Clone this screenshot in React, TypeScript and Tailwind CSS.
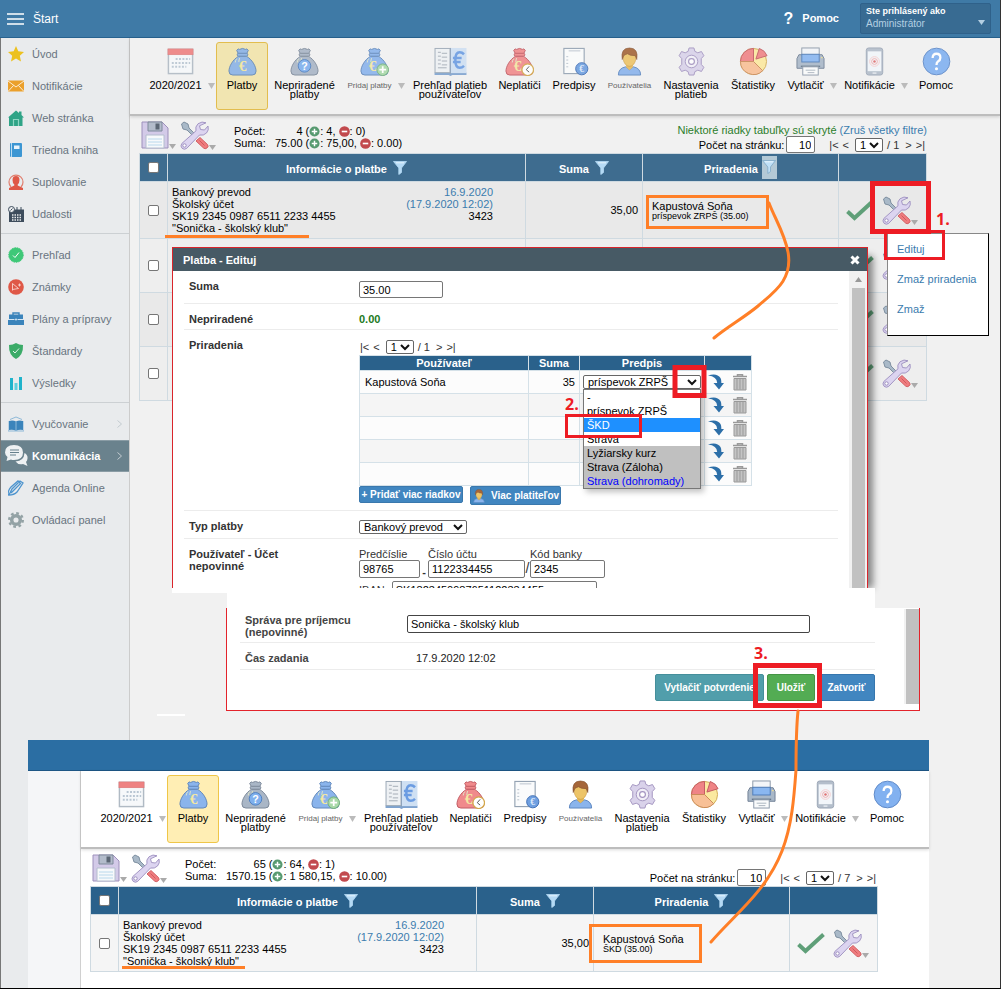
import type { ReactNode } from "react";
import clsx from "clsx";

/* ---------- icons ---------- */

type BagProps = { fill: string; stroke: string; children?: ReactNode };

function Bag({ fill, stroke, children }: BagProps) {
    return (
        <svg viewBox="0 0 30 30" className="h-[29px] w-[29px]" aria-hidden="true">
            <path d="M11 9.500C5 13 1 20 1 25q0 4 4 4h20q4 0 4-4c0-5-4-12-10-15.500z" fill={fill} stroke={stroke} />
            <path d="M9 3.500q1.500-2.500 3-1 3-2 6 0 1.500-1.500 3 1L19 7.500h-8z" fill={fill} stroke={stroke} />
            <rect x="9.500" y="6.500" width="11" height="3" rx="1.500" fill={fill} stroke={stroke} />
            <path d="M9 12q-1.500 2-1.500 4M12 11.500q-.8 2-.8 4" stroke="#dfe6c8" fill="none" />
            {children}
        </svg>
    );
}

function Euro({ x = 15, y = 25, size = 16, color = "#f3e7a2" }: { x?: number; y?: number; size?: number; color?: string }) {
    return (
        <text x={x} y={y} fontSize={size} fontWeight="bold" fill={color} textAnchor="middle" fontFamily="Liberation Serif, serif">
            €
        </text>
    );
}

const BlueBag = () => (
    <Bag fill="#8ab4ec" stroke="#5f86b8"><Euro /></Bag>
);

const GreyBag = () => (
    <Bag fill="#a9b6c6" stroke="#7b8898">
        <circle cx="15" cy="19.500" r="6.500" fill="#7fb0ee" stroke="#4f7fc0" />
        <text x="15" y="23.500" fontSize="11" fontWeight="bold" fill="#fff" textAnchor="middle">?</text>
    </Bag>
);

const AddBag = () => (
    <Bag fill="#8ab4ec" stroke="#5f86b8">
        <Euro x={13} />
        <circle cx="23.500" cy="23.500" r="6" fill="#a9d9a9" stroke="#6fae78" />
        <path d="M23.500 20v7M20 23.500h7" stroke="#fff" strokeWidth="1.800" />
    </Bag>
);

const RedBag = () => (
    <Bag fill="#f08a8c" stroke="#c05a62">
        <Euro x={13} />
        <circle cx="23.500" cy="23.500" r="6" fill="#fff" stroke="#d3a84c" strokeWidth="1.300" />
        <path d="M25 20l-3 3.500 3 2.500" stroke="#555" fill="none" />
    </Bag>
);

const Calendar = () => (
    <svg viewBox="0 0 30 30" className="h-[29px] w-[29px]" aria-hidden="true">
        <rect x="2.500" y="2.500" width="25" height="25" fill="#f6f8fa" stroke="#b0bac4" strokeWidth="1.500" />
        <rect x="2" y="2" width="26" height="6" fill="#ee8282" stroke="#d97474" strokeWidth=".6" />
        <path d="M10 12.500h15M6 16.500h19M6 20.500h15" stroke="#b9c6d3" strokeWidth="2" strokeDasharray="2 1.500" />
    </svg>
);

const Book = () => (
    <svg viewBox="0 0 34 30" className="h-[29px] w-[33px]" aria-hidden="true">
        <path d="M.5 26.500h33V29H19l-2 1-2-1H.5z" fill="#7fa3cf" />
        <rect x="1" y="1.500" width="15.500" height="25" fill="#eef1f4" stroke="#9ba8b5" />
        <rect x="17" y="1" width="16.500" height="26" fill="#cfe0f3" />
        <path d="M17 1v27" stroke="#8aa0b8" />
        <path d="M4 5.500h3M4 9.500h3M4 13.500h3M4 17.500h3M8 6.500h5.500M8 10.500h5.500M8 14.500h5.500M8 18.500h5.500M4 21.500h9" stroke="#a3abb4" />
        <path d="M31 7.500Q29 5.500 26.500 5.500q-4.500 0-4.500 8t4.500 8q2.500 0 4.500-2M19.500 11.500h9M19.500 15.500h8" fill="none" stroke="#6b9ce2" strokeWidth="2.600" />
    </svg>
);

const Document = () => (
    <svg viewBox="0 0 30 30" className="h-[29px] w-[29px]" aria-hidden="true">
        <rect x="4" y="1.500" width="21" height="26" fill="#fafbfc" stroke="#95a3b3" strokeWidth="1.200" />
        <path d="M6.500 10h2M6.500 13.500h2M6.500 17h2M6.500 20.500h2M9 4h12" stroke="#b9c2cc" />
        <circle cx="22.500" cy="22.500" r="6.300" fill="#6f9fe0" stroke="#3f6fb5" />
        <Euro x={22.5} y={26} size={10} color="#dce9fb" />
    </svg>
);

function Person({ className = "h-[29px] w-[29px]" }: { className?: string }) {
    return (
        <svg viewBox="0 0 30 30" className={className} aria-hidden="true">
            <path d="M3.500 29q0-7 7.500-8.500l4 3 4-3q7.500 1.500 7.500 8.500z" fill="#8ab4ec" stroke="#5b86c0" />
            <path d="M11.500 17h7v4l-3.500 3-3.500-3z" fill="#e5b95c" />
            <ellipse cx="15" cy="11.500" rx="6.500" ry="8.500" fill="#edc468" stroke="#c9973a" strokeWidth=".6" />
            <path d="M7.500 13Q5.500 1 15 1q9.500 0 7.500 12l-1.500-4q-6 0-8-2-3 1-4 2z" fill="#a5663a" stroke="#7f4a28" strokeWidth=".6" />
        </svg>
    );
}

const Gear = () => (
    <svg viewBox="0 0 30 30" className="h-[29px] w-[29px]" aria-hidden="true">
        <path
            d="M12.500 1h5l1 3.500 3 1.500 3.800-1.300 2.500 4.300-2.700 3v6l2.700 3-2.500 4.300-3.800-1.300-3 1.500-1 3.500h-5l-1-3.500-3-1.500-3.800 1.300L2.200 21l2.700-3v-6l-2.700-3 2.500-4.300L8.500 6l3-1.500z"
            fill="#d9d2ea" stroke="#a394c0" strokeLinejoin="round"
        />
        <circle cx="15" cy="15" r="6.500" fill="#f1eff7" stroke="#a394c0" />
        <circle cx="15" cy="15" r="3" fill="#fff" stroke="#a394c0" strokeWidth="1.200" />
    </svg>
);

const Pie = () => (
    <svg viewBox="0 0 30 30" className="h-[29px] w-[29px]" aria-hidden="true">
        <circle cx="15" cy="15" r="13.500" fill="#fbe9a0" stroke="#d0ab55" />
        <path d="M15 15V1.500A13.500 13.500 0 0 0 1.500 15z" fill="#ef8486" stroke="#c25a60" />
        <path d="M15 15H1.500A13.500 13.500 0 0 0 24.500 24.500z" fill="#f8c096" stroke="#c98a58" />
        <path d="M17.500 12.500l3.500-11q6 2 8 7.500z" fill="#ef8486" stroke="#c25a60" />
    </svg>
);

const Printer = () => (
    <svg viewBox="0 0 30 30" className="h-[29px] w-[29px]" aria-hidden="true">
        <rect x="6" y="1" width="18" height="9" fill="#f3f5f8" stroke="#8b98a8" />
        <path d="M3 8h24l2 4v10H1V12z" fill="#a9b8c8" stroke="#708094" />
        <rect x="6" y="7.500" width="18" height="8" fill="#8ab7f0" stroke="#4f7cb8" />
        <path d="M5 20h20" stroke="#66768a" strokeWidth="1.500" />
        <rect x="7" y="20.500" width="16" height="8.500" fill="#fafbfc" stroke="#8b98a8" />
        <path d="M10 24h10M12 26.500h7" stroke="#aab4bf" />
        <path d="M26 11h1.500" stroke="#f3e090" strokeWidth="1.500" />
    </svg>
);

const Phone = () => (
    <svg viewBox="0 0 30 30" className="h-[29px] w-[29px]" aria-hidden="true">
        <rect x="6.500" y="1" width="17" height="28" rx="2.500" fill="#b4becb" stroke="#9aa6b5" />
        <rect x="8" y="4.500" width="14" height="20.500" fill="#f2f6fa" />
        <circle cx="15" cy="15" r="5" fill="none" stroke="#f6cfcf" />
        <circle cx="15" cy="15" r="3" fill="none" stroke="#efaaaa" />
        <circle cx="15" cy="15" r="1.300" fill="#e07272" />
        <path d="M13 27h4" stroke="#e3e8ee" strokeWidth="1.500" />
    </svg>
);

const Help = () => (
    <svg viewBox="0 0 30 30" className="h-[29px] w-[29px]" aria-hidden="true">
        <circle cx="15" cy="15" r="13.800" fill="#82b1f0" stroke="#5d88c6" />
        <path d="M11 11.500q0-4.500 4-4.500t4 4q0 2.500-2.500 4-1.500 1-1.500 3.500" fill="none" stroke="#fff" strokeWidth="2.400" />
        <circle cx="15" cy="22.500" r="1.600" fill="#fff" />
    </svg>
);

const Floppy = () => (
    <svg viewBox="0 0 28 28" className="h-7 w-7" aria-hidden="true">
        <path d="M1 1h20l6 6v20H1z" fill="#d3cae8" stroke="#9d90bb" />
        <path d="M7 1h14v9H7z" fill="#b3bccb" stroke="#7f8a9b" />
        <rect x="14.500" y="2.500" width="4" height="6" fill="#5b6674" />
        <path d="M5 14h18v13H5z" fill="#f7f9fb" stroke="#b4bece" />
        <path d="M7 18h14M7 21h14M7 24h14" stroke="#b9d8ec" />
    </svg>
);

const Tools = () => (
    <svg viewBox="0 0 29 29" className="h-[29px] w-[29px]" aria-hidden="true">
        <path d="M1.500 3l2.500-2 4 2 1 4 7 7-2 2-7-7-4-1z" fill="#a9b9c8" stroke="#76889a" strokeWidth=".9" />
        <path d="M17 19l3-2.500 7.500 7q1.500 2-.5 3.500t-3.500 0L16 20z" fill="#ef7c7e" stroke="#cf5a60" strokeWidth=".9" />
        <path d="M19.500 19.500l5 5" stroke="#cf5a60" />
        <path
            d="M26 1.800q-4-2-8 1-3.200 3-2 7L1.800 22.500q-1.800 2.500.2 4.700 2.200 2 4.700.2L19.500 14q4 1 7-2 2.800-3 1.500-7l-3.500 4-4-.5-1-3.700z"
            fill="#dcd4f0" stroke="#9c8fbe" strokeWidth=".9"
        />
        <circle cx="4.500" cy="24.500" r="1.700" fill="#fff" stroke="#9c8fbe" />
    </svg>
);

const Check = () => (
    <svg viewBox="0 0 28 22" className="h-[22px] w-7" aria-hidden="true">
        <path d="M1.500 12.500l7 6.500L26.500 2.500" fill="none" stroke="#5f9f78" strokeWidth="4" />
    </svg>
);

function Funnel({ outlined }: { outlined?: boolean }) {
    return (
        <svg viewBox="0 0 14 14" className="h-[14px] w-[14px]" aria-hidden="true">
            <path
                d="M.5 0.500h13L8.500 7V11.500L5.800 13.500V7z"
                fill={outlined ? "#bfe0f7" : "#b5daf5"}
                stroke={outlined ? "#7fa9c6" : "#b5daf5"}
                strokeWidth=".8"
            />
            <path d="M3 1.800h8" stroke="#e6f4fd" />
        </svg>
    );
}

const Caret = ({ className }: { className?: string }) => (
    <svg viewBox="0 0 7 6" className={clsx("h-[5px] w-[7px] shrink-0", className)} preserveAspectRatio="none" aria-hidden="true">
        <path d="M0 0h7L3.500 6z" fill="currentColor" />
    </svg>
);

const Plus = () => (
    <svg viewBox="0 0 12 12" className="inline h-[11px] w-[11px] align-[-2px]" aria-hidden="true">
        <circle cx="6" cy="6" r="5.500" fill="#579a70" />
        <path d="M6 3v6M3 6h6" stroke="#fff" strokeWidth="1.600" />
    </svg>
);

const Minus = () => (
    <svg viewBox="0 0 12 12" className="inline h-[11px] w-[11px] align-[-2px]" aria-hidden="true">
        <circle cx="6" cy="6" r="5.800" fill="#c24a4e" />
        <path d="M3 6h6" stroke="#fff" strokeWidth="1.800" />
    </svg>
);

/* ---------- small controls ---------- */

function Checkbox({ label }: { label: string }) {
    return (
        <input
            type="checkbox"
            aria-label={label}
            className="block h-[11px] w-[11px] appearance-none rounded-[2px] border border-[#767676] bg-white"
        />
    );
}

function Select({ label, options, className }: { label: string; options: string[]; className?: string }) {
    return (
        <span className={clsx("relative inline-block h-[14px]", className)}>
            <select
                aria-label={label}
                className="block h-[14px] w-full appearance-none rounded-[2px] border border-[#666] bg-white pl-1 text-[11px] leading-3 text-black"
            >
                {options.map((o) => <option key={o}>{o}</option>)}
            </select>
            <svg viewBox="0 0 10 7" className="pointer-events-none absolute top-1 right-1 h-[7px] w-[10px]" aria-hidden="true">
                <path d="M1 1l4 4 4-4" fill="none" stroke="#111" strokeWidth="2" />
            </svg>
        </span>
    );
}

function Pager({ total }: { total: number }) {
    return (
        <div className="flex items-center text-[11px] leading-3 whitespace-pre text-[#333]">
            <a href="#first">|&lt;</a>
            <a href="#prev" className="ml-1">&lt;</a>
            <Select label="Strana" options={["1"]} className="ml-[6px] w-[28px]" />
            <span className="ml-1">/ {total}</span>
            <a href="#next" className="ml-[6px]">&gt;</a>
            <a href="#last" className="ml-1">&gt;|</a>
        </div>
    );
}

/* ---------- sidebar ---------- */

const navIcon = "h-4 w-4";

const navGroups: { label: string; icon: ReactNode; active?: boolean; more?: boolean }[][] = [
    [
        { label: "Úvod", icon: <svg viewBox="0 0 16 16" className={navIcon}><path d="M8 0l2.300 5.300 5.700.6-4.200 3.800 1.200 5.800L8 12.600l-5 2.900 1.200-5.800L0 5.900l5.700-.6z" fill="#ecc11f" /></svg> },
        { label: "Notifikácie", icon: <svg viewBox="0 0 16 16" className={navIcon}><path d="M0 2.500h16v11H0z" fill="#eba02c" /><path d="M0 3l8 6 8-6M0 13.500l5.500-6M16 13.500l-5.500-6" stroke="#fff" fill="none" strokeWidth=".8" /></svg> },
        { label: "Web stránka", icon: <svg viewBox="0 0 16 16" className={navIcon}><path d="M0 7.500L8 .5l3 2.500V1.500h2.500v3.500L16 7.500h-1.500V16H1V7.500z" fill="#2fa487" /><path d="M5.500 16V9.500h5V16" fill="none" stroke="#8fd6c4" strokeWidth="1.200" /></svg> },
        { label: "Triedna kniha", icon: <svg viewBox="0 0 16 16" className={navIcon}><rect x="2" y="1" width="12" height="14" rx="1" fill="#3c96d3" /><path d="M3.500 1v14" stroke="#b9dcf3" /><rect x="6" y="3.500" width="5.500" height="3.500" fill="#e8f3fb" /></svg> },
        { label: "Suplovanie", icon: <svg viewBox="0 0 16 16" className={navIcon}><path d="M3 13A7 7 0 1 1 13 13" fill="none" stroke="#e07f6f" strokeWidth="1.200" /><path d="M4.500 6Q4.500 2 8 2t3.500 4q0 3-1.800 4.500v1L15 14v2H1v-2l5.300-2.500v-1Q4.500 9 4.500 6z" fill="#df5847" /></svg> },
        { label: "Udalosti", icon: <svg viewBox="0 0 16 16" className={navIcon}><path d="M1 3.500h15V16H1z" fill="#3d4c5c" /><circle cx="3.500" cy="3.500" r="3" fill="#e9ebed" stroke="#3d4c5c" /><path d="M2.500 4.500l2-2M9 1v3M13 1v3" stroke="#3d4c5c" /><path d="M4 9h9M4 11.500h9M4 14h9" stroke="#e9ebed" strokeWidth="1.300" strokeDasharray="1.500 1" /></svg> },
    ],
    [
        { label: "Prehľad", icon: <svg viewBox="0 0 16 16" className={navIcon}><circle cx="8" cy="8" r="7.300" fill="#3fc878" stroke="#3fc878" strokeDasharray="1.500 1" /><path d="M5 8.500l2 2 4-5" stroke="#fff" fill="none" /></svg> },
        { label: "Známky", icon: <svg viewBox="0 0 16 16" className={navIcon}><circle cx="8" cy="8" r="7.800" fill="#df5847" /><path d="M4.500 11.500v-7l6 5-6 1M10 6h3M11.500 4.500v3" stroke="#f9d5cf" fill="none" strokeWidth=".9" /></svg> },
        { label: "Plány a prípravy", icon: <svg viewBox="0 0 16 16" className={navIcon}><path d="M5 4V2h6v2" fill="none" stroke="#3b84bb" strokeWidth="1.400" /><path d="M1 3.500h14V8h1v6H0V8h1z" fill="#3b84bb" /><path d="M0 8.500h6.500M9.500 8.500H16" stroke="#d5e6f3" /><circle cx="8" cy="8.500" r="1" fill="#d5e6f3" /></svg> },
        { label: "Štandardy", icon: <svg viewBox="0 0 16 16" className={navIcon}><path d="M8 0q3 2 7 2 .5 10-7 14Q.5 12 1 2q4 0 7-2z" fill="#3bab68" /><path d="M5 8l2 2 4-4.500" stroke="#e0f5e8" fill="none" /></svg> },
        { label: "Výsledky", icon: <svg viewBox="0 0 16 16" className={navIcon}><path d="M2 3h3v12H2zM11 2h3v13h-3z" fill="#20b3cb" /><path d="M6.500 8h3v7h-3z" fill="#5fd0de" /></svg> },
    ],
    [
        { label: "Vyučovanie", more: true, icon: <svg viewBox="0 0 16 16" className={navIcon}><path d="M1 5q4-1 7 .5Q11 4 15 5v9q-4-1-7 1-3-2-7-1z" fill="#3b84bb" /><path d="M2 3.500L8 1l6 2.500M8 5.500V15M0 5v10h16V5" stroke="#8fb9d8" fill="none" /></svg> },
        { label: "Komunikácia", more: true, active: true, icon: <svg viewBox="0 0 24 22" className="-ml-[3px] h-[22px] w-6 shrink-0"><path d="M9 0q9 0 9 7.500T9 15q-2 0-3-.5L1.500 16l1-4Q0 10 0 7.500 0 0 9 0z" fill="#eef1f3" /><path d="M19.500 8q3.500 2 3 5.500-.2 2-1.500 3.500l1.500 4-4.500-2q-5 1-7.500-2.500Q19 16 19.500 8z" fill="#eef1f3" /><path d="M5 5h9M5 7.500h9M5 10h6" stroke="#66808c" /></svg> },
        { label: "Agenda Online", icon: <svg viewBox="0 0 16 16" className={navIcon}><path d="M0 15q0-5 3-8l7-6 2 2M1 15q5 0 8-3l6-9-3-2-8 8zM3 13L13 3" fill="none" stroke="#4d94ce" strokeWidth="1.300" /></svg> },
        { label: "Ovládací panel", icon: <svg viewBox="0 0 16 16" className={navIcon}><circle cx="8" cy="8" r="4.300" fill="none" stroke="#93a2a5" strokeWidth="3.500" /><circle cx="8" cy="8" r="6.800" fill="none" stroke="#93a2a5" strokeWidth="2.400" strokeDasharray="2.700 2.640" /></svg> },
    ],
];

function Sidebar() {
    return (
        <nav className="w-[130px] shrink-0 border-r border-l border-r-[#ccc] border-l-[#777] bg-[#e9ebed]">
            {navGroups.map((group, i) => (
                <ul key={i} className={clsx(i > 0 && "mt-[3px] border-t border-[#ccd0d3] pt-[5px]")}>
                    {group.map((item) => (
                        <li key={item.label}>
                            <a
                                href="#menu"
                                className={clsx(
                                    "flex h-8 items-center pr-[7px] pl-[7px] text-[11px] leading-3",
                                    item.active ? "border-y border-[#8a9ca5] bg-[#6a828d] font-bold text-white" : "text-[#687480]",
                                )}
                            >
                                <span className="flex w-6 shrink-0 items-center">{item.icon}</span>
                                <span className="flex-1 whitespace-nowrap">{item.label}</span>
                                {item.more && (
                                    <svg viewBox="0 0 5 8" className="h-2 w-[5px]" aria-hidden="true">
                                        <path d="M.5 .5L4.500 4l-4 3.500" fill="none" stroke="#c3cbd0" />
                                    </svg>
                                )}
                            </a>
                        </li>
                    ))}
                </ul>
            ))}
        </nav>
    );
}

/* ---------- ribbon and payments list ---------- */

const ribbon: { label: string; icon: ReactNode; width: string; arrow?: boolean; small?: boolean; active?: boolean }[] = [
    { label: "2020/2021", icon: <Calendar />, width: "w-[68px]", arrow: true },
    { label: "Platby", icon: <BlueBag />, width: "w-[52px]", active: true },
    { label: "Nepriradené\nplatby", icon: <GreyBag />, width: "w-[73px]" },
    { label: "Pridaj platby", icon: <AddBag />, width: "w-[70px]", arrow: true, small: true },
    { label: "Prehľad platieb\npoužívateľov", icon: <Book />, width: "w-[78px]" },
    { label: "Neplatiči", icon: <RedBag />, width: "w-[61px]" },
    { label: "Predpisy", icon: <Document />, width: "w-[48px]" },
    { label: "Používatelia", icon: <Person />, width: "w-[63px]", small: true },
    { label: "Nastavenia\nplatieb", icon: <Gear />, width: "w-[60px]" },
    { label: "Štatistiky", icon: <Pie />, width: "w-[64px]" },
    { label: "Vytlačiť", icon: <Printer />, width: "w-[54px]", arrow: true },
    { label: "Notifikácie", icon: <Phone />, width: "w-[74px]", arrow: true },
    { label: "Pomoc", icon: <Help />, width: "w-[46px]" },
];

function Ribbon({ dim }: { dim?: boolean }) {
    return (
        <div className="flex h-[78px] border-b-2 border-[#bdbdbd] pt-1 pl-[18px] shadow-[0_1px_3px_rgba(0,0,0,0.15)]">
            {ribbon.map((item) => (
                <button
                    key={item.label}
                    type="button"
                    className={clsx(
                        "flex h-[68px] shrink-0 flex-col items-center gap-[5px] rounded-[3px] border pt-1",
                        item.width,
                        !item.active && "border-transparent",
                        item.active && (dim ? "border-[#e2bd4e] bg-[#f1e5b1]" : "border-[#efc648] bg-[#ffeeb4]"),
                    )}
                >
                    <span className={clsx(item.arrow && "mr-1", dim && "opacity-90")}>{item.icon}</span>
                    <span className="flex items-center gap-[6px]">
                        <span
                            className={clsx(
                                "leading-[9px] whitespace-pre",
                                item.small ? "text-[8px] text-[#666]" : "text-[11px] text-black",
                            )}
                        >
                            {item.label}
                        </span>
                        {item.arrow && <Caret className="h-[6px] text-[#bbb]" />}
                    </span>
                </button>
            ))}
        </div>
    );
}

type PaymentsProps = {
    dim?: boolean;
    counts: [string, string, string];
    sums: [string, string, string];
    pages: number;
    note: string;
    filtered?: boolean;
    extraRows?: number;
    tableMargin: string;
};

function ToolsButton() {
    return (
        <button type="button" aria-label="Nástroje" className="flex items-end">
            <Tools />
            <Caret className="text-[#aaa]" />
        </button>
    );
}

function RowActions() {
    return (
        <div className="flex items-center gap-2 pl-[7px]">
            <Check />
            <ToolsButton />
        </div>
    );
}

function Payments({ dim, counts, sums, pages, note, filtered, extraRows = 0, tableMargin }: PaymentsProps) {
    const cell = "border border-[#cfdae1]";
    const row = dim ? "bg-[#e9e9e9]" : "bg-[#f5f5f5]";
    return (
        <section>
            <Ribbon dim={dim} />
            <div className={clsx("ml-[11px] flex h-[37px] justify-between", tableMargin)}>
                <div className="flex items-start pt-[5px]">
                    <button type="button" aria-label="Uložiť zoznam" className="flex items-end">
                        <Floppy />
                        <Caret className="text-[#aaa]" />
                    </button>
                    <div className="ml-1"><ToolsButton /></div>
                    <div className="mt-1 ml-[18px] grid grid-cols-[41px_auto_auto] text-[11px] leading-3 whitespace-nowrap">
                        <span>Počet:</span>
                        <span className="text-right">{counts[0]}</span>
                        <span className="pl-[3px]">(<Plus />: {counts[1]}, <Minus />: {counts[2]})</span>
                        <span>Suma:</span>
                        <span className="text-right">{sums[0]}</span>
                        <span className="pl-[3px]">(<Plus />: {sums[1]}, <Minus />: {sums[2]})</span>
                    </div>
                </div>
                <div className="flex flex-col items-end justify-end text-[11px] leading-3 whitespace-nowrap">
                    {filtered && (
                        <p className="text-[#2b7d2b]">
                            Niektoré riadky tabuľky sú skryté <a href="#filters" className="text-[#3b7cae]">(Zruš všetky filtre)</a>
                        </p>
                    )}
                    <div className="mr-[2px] flex items-center">
                        <label className="flex items-center gap-[2px]">
                            Počet na stránku:
                            <input defaultValue="10" className="h-[17px] w-[29px] rounded-[2px] border border-[#767676] bg-white pr-[3px] text-right text-[11px]" />
                        </label>
                        <span className="ml-[14px]"><Pager total={pages} /></span>
                    </div>
                </div>
            </div>
            <div className={clsx("ml-[9px]", tableMargin)}>
                <table className="w-full table-fixed border-collapse text-[11px] leading-3 text-black">
                    <colgroup>
                        <col className="w-[28px]" />
                        <col />
                        <col className="w-[117px]" />
                        <col className="w-[196px]" />
                        <col className="w-[88px]" />
                    </colgroup>
                    <thead>
                        <tr className={clsx("h-[28px] text-white", dim ? "bg-[#3e6c8f]" : "bg-[#2a618b]")}>
                            <th className={cell}><div className="flex justify-center"><Checkbox label="Vybrať všetko" /></div></th>
                            <th className={cell}><div className="flex items-center justify-center gap-[6px]"><span className="pt-[3px]">Informácie o platbe</span><Funnel /></div></th>
                            <th className={cell}><div className="flex items-center justify-center gap-[6px]"><span className="pt-[3px]">Suma</span><Funnel /></div></th>
                            <th className={cell}>
                                <div className={clsx("flex items-center justify-center", filtered ? "gap-1" : "gap-[6px]")}>
                                    <span className="pt-[3px]">Priradenia</span>
                                    <span className={clsx("flex justify-center", filtered && "h-[23px] w-[15px] bg-[#b3c9d6] pt-1")}><Funnel outlined={filtered} /></span>
                                </div>
                            </th>
                            <th className={cell} aria-label="Akcie" />
                        </tr>
                    </thead>
                    <tbody>
                        <tr className={clsx("h-[57px]", row)}>
                            <td className={cell}><div className="flex justify-center"><Checkbox label="Vybrať platbu" /></div></td>
                            <td className={cell}>
                                <div className="flex justify-between pr-[32px] pl-1">
                                    <p>Bankový prevod<br />Školský účet<br />SK19 2345 0987 6511 2233 4455<br />"Sonička - školský klub"</p>
                                    <p className="text-right">
                                        <span className="text-[#3b7cae]">16.9.2020<br />(17.9.2020 12:02)</span><br />3423
                                    </p>
                                </div>
                            </td>
                            <td className={clsx(cell, "pr-1 text-right")}>35,00</td>
                            <td className={clsx(cell, "pl-[9px]")}>
                                Kapustová Soňa
                                <div className="text-[9px] leading-[9px]">{note}</div>
                            </td>
                            <td className={cell}><RowActions /></td>
                        </tr>
                        {Array.from({ length: extraRows }, (_, i) => (
                            <tr key={i} className={clsx("h-[54px]", i === 1 ? "bg-[#e9e9e9]" : "bg-[#eee]")}>
                                <td className={cell}><div className="flex justify-center"><Checkbox label="Vybrať platbu" /></div></td>
                                <td className={cell} />
                                <td className={cell} />
                                <td className={cell} />
                                <td className={cell}><RowActions /></td>
                            </tr>
                        ))}
                    </tbody>
                </table>
            </div>
        </section>
    );
}

/* ---------- edit dialog ---------- */

const dialogInput = "rounded-[2px] border border-[#767676] bg-white px-[3px] text-[11px] leading-3 text-black";

function FormRow({ label, height, children }: { label: string; height: string; children: ReactNode }) {
    return (
        <div className={clsx("grid grid-cols-[170px_1fr] border-b border-[#ececec] pl-[5px]", height)}>
            <div className="pt-[9px] font-bold whitespace-pre text-[#333]">{label}</div>
            <div>{children}</div>
        </div>
    );
}

function RowTools() {
    return (
        <div className="flex items-center justify-center gap-2">
            <button type="button" aria-label="Presunúť">
                <svg viewBox="0 0 16 16" className="h-4 w-4" aria-hidden="true">
                    <path d="M0 1.500Q9-1.500 12.500 4q1 2 .8 5H16l-5 6.500L5.500 9h3.700Q9 2.500 0 1.500z" fill="#2d6fa8" />
                </svg>
            </button>
            <button type="button" aria-label="Odstrániť">
                <svg viewBox="0 0 16 17" className="h-[17px] w-4" aria-hidden="true">
                    <path d="M1 2.500h14M5.500 2V.8h5V2" stroke="#9a9a9a" strokeWidth="1.500" fill="none" />
                    <path d="M2 4.500h12V16H2z" fill="#c4c4c4" stroke="#999" />
                    <path d="M5 5v10.500M8 5v10.500M11 5v10.500" stroke="#999" />
                </svg>
            </button>
        </div>
    );
}

const prescriptions = [
    { label: "-" },
    { label: "príspevok ZRPŠ" },
    { label: "ŠKD", tone: "bg-[#1e90ff] text-white" },
    { label: "Strava" },
    { label: "Lyžiarsky kurz", tone: "bg-[#c0c0c0]" },
    { label: "Strava (Záloha)", tone: "bg-[#c0c0c0]" },
    { label: "Strava (dohromady)", tone: "bg-[#c0c0c0] text-[#0000ff]" },
];

function EditDialog() {
    const head = "border border-[#d5e1e8] bg-[#2a618b] text-white";
    const cell = "border border-[#d5e1e8]";
    return (
        <div role="dialog" aria-label="Platba - Edituj" className="absolute top-[247px] right-[132px] left-[172px] h-[341px] overflow-hidden border-x border-t border-[#d9252b] bg-white text-[11px] leading-3">
            <div className="flex h-[23px] items-center justify-between bg-[#475a65] pr-[7px] pl-[10px] text-white">
                <h2 className="font-bold">Platba - Edituj</h2>
                <button type="button" aria-label="Zavrieť">
                    <svg viewBox="0 0 10 10" className="h-[10px] w-[10px]" aria-hidden="true"><path d="M1.500 1.500l7 7M8.500 1.500l-7 7" stroke="#fff" strokeWidth="3" /></svg>
                </button>
            </div>
            <div className="flex">
                <form className="mr-[11px] ml-[11px] flex-1">
                    <FormRow label="Suma" height="h-[33px]">
                        <input aria-label="Suma" defaultValue="35.00" className={clsx(dialogInput, "mt-[10px] h-[17px] w-[84px]")} />
                    </FormRow>
                    <FormRow label="Nepriradené" height="h-[26px]">
                        <div className="pt-[9px] font-bold text-[#1d7a1d]">0.00</div>
                    </FormRow>
                    <FormRow label="Priradenia" height="h-[181px]">
                        <div className="mt-[10px] mb-[1px] pl-[1px]"><Pager total={1} /></div>
                        <table className="w-[393px] table-fixed border-collapse text-black">
                            <colgroup>
                                <col />
                                <col className="w-[51px]" />
                                <col className="w-[125px]" />
                                <col className="w-[47px]" />
                            </colgroup>
                            <thead>
                                <tr className="h-[15px]">
                                    <th className={head}>Používateľ</th>
                                    <th className={head}>Suma</th>
                                    <th className={head}>Predpis</th>
                                    <th className={head} aria-label="Akcie" />
                                </tr>
                            </thead>
                            <tbody>
                                {[0, 1, 2, 3, 4].map((i) => (
                                    <tr key={i} className={clsx("h-[23px]", i % 2 === 1 ? "bg-[#f5f5f5]" : "bg-[#fcfcfc]")}>
                                        <td className={clsx(cell, "pl-[5px]")}>{i === 0 && "Kapustová Soňa"}</td>
                                        <td className={clsx(cell, "pr-1 text-right")}>{i === 0 && "35"}</td>
                                        <td className={cell}>
                                            {i === 0 && (
                                                <div className="relative ml-[3px] w-[118px]">
                                                    <Select label="Predpis" options={["príspevok ZRPŠ"]} className="block w-full" />
                                                    <ul role="listbox" aria-label="Predpis" className="absolute top-[14px] left-0 w-full border border-[#777] bg-white shadow-[3px_3px_6px_rgba(0,0,0,0.25)]">
                                                        {prescriptions.map((p) => (
                                                            <li key={p.label} role="option" aria-selected={p.label === "ŠKD"} className={clsx("h-[14px] pl-[3px] leading-[14px] whitespace-nowrap", p.tone)}>
                                                                {p.label}
                                                            </li>
                                                        ))}
                                                    </ul>
                                                </div>
                                            )}
                                        </td>
                                        <td className={cell}><RowTools /></td>
                                    </tr>
                                ))}
                            </tbody>
                        </table>
                        <div className="flex items-start gap-[7px] text-[10px] font-bold text-white">
                            <button type="button" className="h-[17px] w-[104px] rounded-[2px] border border-[#3a78ad] bg-[#4186c0] whitespace-nowrap">+ Pridať viac riadkov</button>
                            <button type="button" className="flex h-[19px] w-[91px] items-center gap-[5px] rounded-[2px] border border-[#3a78ad] bg-[#4186c0] pl-[1px] whitespace-nowrap">
                                <Person className="h-[14px] w-[14px]" />
                                Viac platiteľov
                            </button>
                        </div>
                    </FormRow>
                    <FormRow label="Typ platby" height="h-[28px]">
                        <Select label="Typ platby" options={["Bankový prevod"]} className="mt-[9px] w-[108px]" />
                    </FormRow>
                    <FormRow label={"Používateľ - Účet\nnepovinné"} height="h-[80px]">
                        <div className="flex items-end pt-[9px] text-[#333]">
                            <label className="w-[61px] whitespace-nowrap">Predčíslie<input defaultValue="98765" className={clsx(dialogInput, "block h-[18px] w-full")} /></label>
                            <b className="w-2 text-center">-</b>
                            <label className="w-[97px] whitespace-nowrap">Číslo účtu<input defaultValue="1122334455" className={clsx(dialogInput, "block h-[18px] w-full")} /></label>
                            <span className="w-[5px] text-center text-sm">/</span>
                            <label className="w-[75px] whitespace-nowrap">Kód banky<input defaultValue="2345" className={clsx(dialogInput, "block h-[18px] w-full")} /></label>
                        </div>
                        <label className="mt-[3px] flex items-center gap-1 text-[#333]">
                            IBAN:
                            <input defaultValue="SK1823450987651122334455" className={clsx(dialogInput, "h-[17px] w-[205px]")} />
                        </label>
                    </FormRow>
                </form>
                <div className="flex w-[18px] flex-col items-center bg-[#f1f1f1]">
                    <span className="flex h-[17px] items-center"><Caret className="rotate-180 text-[#999]" /></span>
                    <span className="h-[400px] w-[13px] bg-[#c1c1c1]" />
                </div>
            </div>
        </div>
    );
}

function DialogFooter() {
    return (
        <div className="absolute top-[608px] right-[80px] left-[226px] flex h-[103px] border-x border-b border-[#e3232b] bg-white text-[11px] leading-3">
            <div className="mr-[29px] ml-[13px] flex-1">
                <div className="flex h-[35px] items-start border-b border-[#ececec] pl-[5px]">
                    <label htmlFor="message" className="w-[162px] shrink-0 pt-[6px] font-bold whitespace-pre text-[#444]">{"Správa pre príjemcu\n(nepovinné)"}</label>
                    <input id="message" defaultValue="Sonička - školský klub" className="mt-[7px] h-[18px] w-[403px] rounded-[2px] border border-[#444] px-[3px] text-[11px] text-black" />
                </div>
                <div className="flex h-[27px] items-center border-b border-[#ececec] pt-[3px] pl-[5px]">
                    <span className="w-[171px] font-bold text-[#444]">Čas zadania</span>
                    <span className="text-[#222]">17.9.2020 12:02</span>
                </div>
                <div className="mt-1 flex justify-end gap-[3px] text-[10px] font-bold text-white">
                    <button type="button" className="h-[27px] w-[109px] rounded-[2px] border border-[#458f9b] bg-[#519eab] whitespace-nowrap">Vytlačiť potvrdenie</button>
                    <button type="button" className="h-[27px] w-[48px] rounded-[2px] border border-[#459545] bg-[#53ac53]">Uložiť</button>
                    <button type="button" className="h-[27px] w-[57px] rounded-[2px] border border-[#3576ae] bg-[#4186c0]">Zatvoriť</button>
                </div>
            </div>
            <div className="mt-[1px] h-[95px] w-[15px] border-l-2 border-[#f1f1f1] bg-[#c1c1c1]" />
        </div>
    );
}

function ContextMenu() {
    return (
        <ul className="absolute top-[233px] right-[11px] h-[103px] w-[102px] border border-t-[#888] border-r-black border-b-black border-l-[#888] bg-white pl-[9px] text-[11px] leading-[30px] whitespace-nowrap text-[#3b7cae]">
            <li><a href="#edit">Edituj</a></li>
            <li><a href="#unassign">Zmaž priradenia</a></li>
            <li><a href="#delete">Zmaž</a></li>
        </ul>
    );
}

/* ---------- tutorial marks drawn over the windows ---------- */

function Marks() {
    const step = "absolute font-['Open_Sans',sans-serif] text-base leading-5 font-bold text-[#ed1c24]";
    return (
        <div className="pointer-events-none absolute inset-0">
            <svg viewBox="0 0 1000 988" className="absolute top-0 left-0 h-[988px] w-[1000px]" aria-hidden="true">
                <g fill="none" stroke="#ff7f27" strokeWidth="3">
                    <rect x="647.500" y="196.500" width="120" height="31" />
                    <path d="M165 236.500h144M122 967.500h123" />
                    <rect x="590.500" y="925.500" width="110" height="36" />
                    <path d="M769 203c6 16 15 29 19 49 5 28-14 40-30 54-13 11-31 21-44 32" strokeLinecap="round" />
                    <path d="M798 711c-2 20-2 40-2 59-2 28-4 55-14 81-16 41-48 64-71 91" strokeLinecap="round" />
                </g>
                <g fill="none" stroke="#ed1c24">
                    <rect x="872.500" y="183.500" width="56" height="48" strokeWidth="5" />
                    <rect x="885.500" y="231.500" width="58" height="27" strokeWidth="3" />
                    <rect x="675" y="367.500" width="29" height="28" strokeWidth="5" />
                    <rect x="566.500" y="415.500" width="74" height="21" strokeWidth="3" />
                    <rect x="755.500" y="665.500" width="64" height="40" strokeWidth="5" />
                </g>
            </svg>
            <span className={clsx(step, "top-[209px] left-[936px]")}>1.</span>
            <span className={clsx(step, "top-[394px] left-[565px]")}>2.</span>
            <span className={clsx(step, "top-[643px] left-[754px]")}>3.</span>
        </div>
    );
}

export default function App() {
    return (
        <div className="relative flex min-h-screen flex-col overflow-hidden border-r border-b border-r-[#333] border-b-black bg-[#f1f1f1] font-['Liberation_Sans',Arial,sans-serif] text-black">
            <header className="flex h-[38px] items-center justify-between border-b border-[#27628f] bg-[#3f7aa6] pr-[9px] pl-[7px] text-white">
                <button type="button" className="flex items-center gap-[9px] text-xs">
                    <svg viewBox="0 0 17 12" className="h-3 w-[17px]" aria-hidden="true"><path d="M0 1h17M0 6h17M0 11h17" stroke="#fff" strokeWidth="1.500" /></svg>
                    Štart
                </button>
                <div className="flex items-center">
                    <a href="#help" className="flex items-center gap-[9px] text-[11px] font-bold"><span className="text-base">?</span>Pomoc</a>
                    <button type="button" className="ml-[21px] flex h-[31px] w-[131px] items-end justify-between rounded-[2px] border border-[#2f618a] bg-[#386b92] px-[5px] pb-[2px] text-left">
                        <span className="text-[9px] leading-3 font-bold">Ste prihlásený ako<span className="block text-[10px] leading-[14px] font-normal text-[#b4cfe2]">Administrátor</span></span>
                        <Caret className="mb-[6px] text-[#b4cfe2]" />
                    </button>
                </div>
            </header>
            <div className="flex flex-1">
                <Sidebar />
                <main className="min-w-0 flex-1">
                    <Payments dim filtered counts={["4", "4", "0"]} sums={["75.00", "75,00", "0.00"]} pages={1} note="príspevok ZRPŠ (35.00)" extraRows={3} tableMargin="mr-[73px]" />
                </main>
            </div>

            <div className="absolute top-[256px] right-[132px] left-[300px] h-[332px] shadow-[5px_0_7px_rgba(0,0,0,0.45)]" />
            <EditDialog />
            <div className="absolute top-[588px] left-[172px] h-[5px] w-[55px] bg-white" />
            <div className="absolute top-[588px] right-[125px] left-[227px] h-[21px] bg-white" />
            <div className="absolute top-[714px] left-[157px] h-[2px] w-7 bg-white" />
            <DialogFooter />
            <ContextMenu />

            <div className="absolute top-[740px] right-[71px] bottom-0 left-[28px] flex flex-col bg-white">
                <div className="h-[31px] border-b border-[#1d5685] bg-[#2b6ea3]" />
                <div className="flex flex-1">
                    <div className="w-[53px] shrink-0 border-r border-[#d0d0d0] bg-[#f5f6f8]" />
                    <div className="min-w-0 flex-1">
                        <Payments counts={["65", "64", "1"]} sums={["1570.15", "1 580,15", "10.00"]} pages={7} note="ŠKD (35.00)" tableMargin="mr-[51px]" />
                    </div>
                </div>
            </div>

            <Marks />
        </div>
    );
}
